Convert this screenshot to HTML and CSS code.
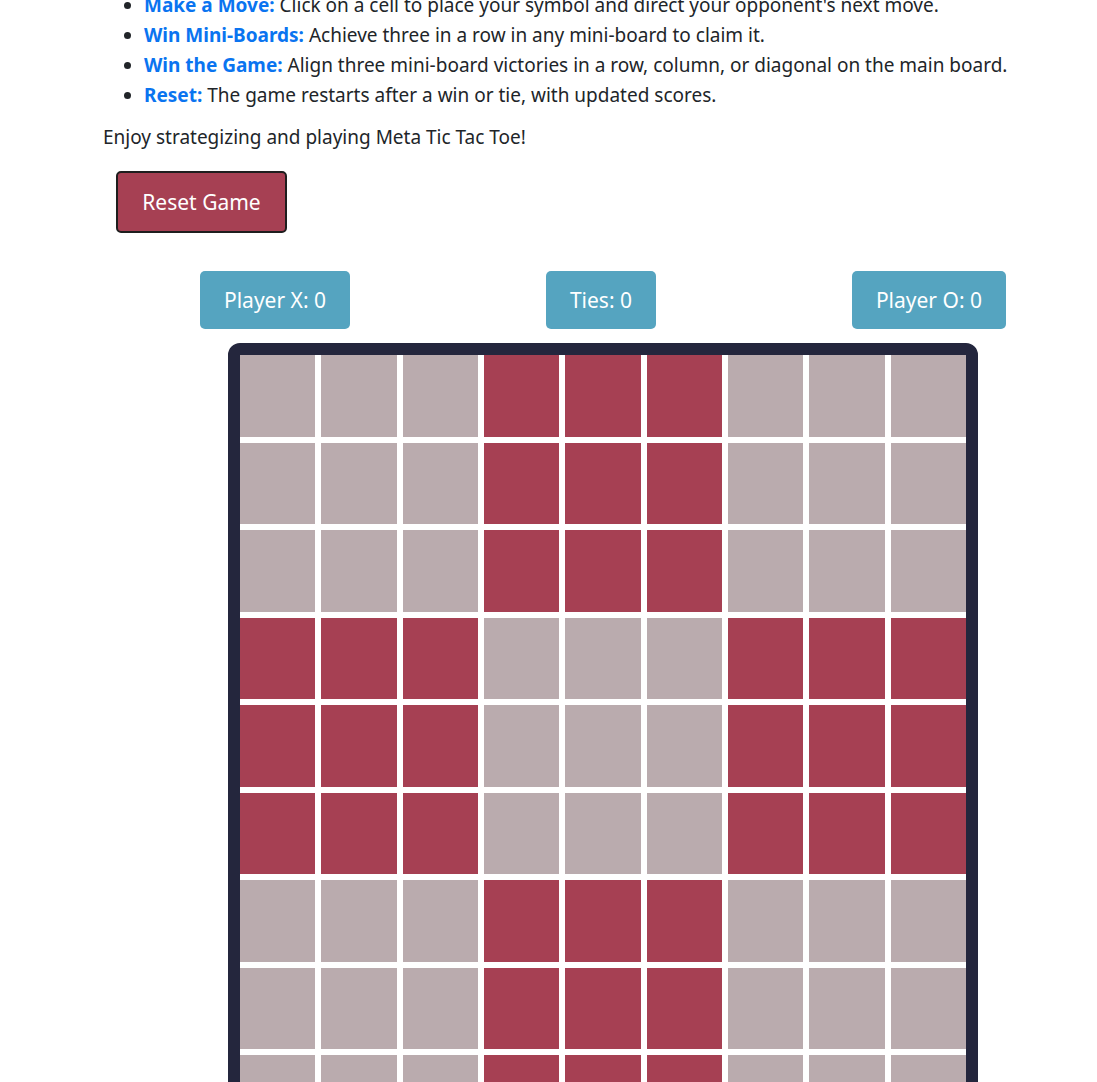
FILE: index.html
```html
<!DOCTYPE html>
<html>
<head>
<meta charset="utf-8">
<link rel="stylesheet" href="styles.css">
</head>
<body>
<main class="page">
  <ul class="rules">
    <li><strong>Make a Move:</strong> Click on a cell to place your symbol and direct your opponent's next move.</li>
    <li><strong>Win Mini-Boards:</strong> Achieve three in a row in any mini-board to claim it.</li>
    <li><strong>Win the Game:</strong> Align three mini-board victories in a row, column, or diagonal on the main board.</li>
    <li><strong>Reset:</strong> The game restarts after a win or tie, with updated scores.</li>
  </ul>
  <p class="enjoy">Enjoy strategizing and playing Meta Tic Tac Toe!</p>
  <button class="reset">Reset Game</button>
  <div class="scores">
    <div class="score">Player X: 0</div>
    <div class="score">Ties: 0</div>
    <div class="score">Player O: 0</div>
  </div>
  <div class="board" id="board"></div>
</main>
<script src="script.js"></script>
</body>
</html>
```
FILE: script.js
```js
const board = document.getElementById('board');
for (let r = 0; r < 9; r++) {
  for (let c = 0; c < 9; c++) {
    const d = document.createElement('div');
    const br = Math.floor(r / 3), bc = Math.floor(c / 3);
    d.className = 'cell ' + ((br + bc) % 2 === 1 ? 'active' : 'idle');
    board.appendChild(d);
  }
}
```
FILE: styles.css
```css
html, body {
  margin: 0;
  padding: 0;
  background: #fff;
}
body {
  font-family: "Noto Sans", "Segoe UI", sans-serif;
  color: #212529;
  font-size: 19px;
  line-height: 30px;
  overflow: hidden;
}
.page {
  width: 1000px;
  margin: -10px 0 0 103px;
}
.rules {
  margin: 0 0 12px 0;
  padding-left: 41px;
}
.rules strong {
  color: #0a74f0;
  font-weight: 700;
}
.enjoy {
  margin: 0 0 19px 0;
}
.reset {
  display: block;
  margin-left: 13px;
  width: 171px;
  height: 62px;
  background: #a64053;
  color: #fff;
  border: 2px solid #1e1e1e;
  border-radius: 5px;
  font-family: inherit;
  font-size: 21px;
}
.scores {
  width: 806px;
  margin: 38px auto 0;
  display: flex;
  justify-content: space-between;
}
.score {
  height: 58px;
  line-height: 58px;
  padding: 0 24px;
  background: #55a4c0;
  color: #fff;
  border-radius: 5px;
  font-size: 21px;
}
.board {
  width: 726px;
  margin: 14px auto 0;
  border: 12px solid #24263d;
  border-radius: 12px;
  display: grid;
  grid-template-columns: repeat(9, 1fr);
  grid-auto-rows: 81.5px;
  gap: 6px;
  background: #fff;
}
.cell.idle { background: #baabae; }
.cell.active { background: #a64053; }
```
